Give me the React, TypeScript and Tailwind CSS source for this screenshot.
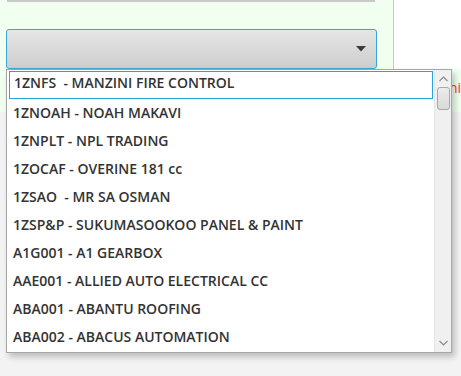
import React from "react";

const items = [
  "1ZNFS  - MANZINI FIRE CONTROL",
  "1ZNOAH - NOAH MAKAVI",
  "1ZNPLT - NPL TRADING",
  "1ZOCAF - OVERINE 181 cc",
  "1ZSAO  - MR SA OSMAN",
  "1ZSP&P - SUKUMASOOKOO PANEL & PAINT",
  "A1G001 - A1 GEARBOX",
  "AAE001 - ALLIED AUTO ELECTRICAL CC",
  "ABA001 - ABANTU ROOFING",
  "ABA002 - ABACUS AUTOMATION",
];

export default function App() {
  return (
    <div
      className="relative w-[461px] h-[376px] bg-[#f3f3f3] overflow-hidden"
      style={{ fontFamily: '"Open Sans", "Noto Sans", sans-serif' }}
    >
      <div className="flex h-[112px]">
        <div className="w-[397px] bg-[#f0fff0] border-r border-[#c8c8c8] pl-[6px]">
          <div className="h-[2px] ml-[1px] w-[368px] bg-[#c9c9c9]" />
          <div className="mt-[27px] h-[40px] w-[371px] rounded-[3px] border border-[#3aa6d6] bg-gradient-to-b from-[#e6e6e6] to-[#cdcdcd] flex items-center justify-end pr-[10px]">
            <svg width="10" height="6" viewBox="0 0 10 6">
              <path d="M0 0 H10 L5 5.5 Z" fill="#3c3c3c" />
            </svg>
          </div>
        </div>
        <div className="flex-1 bg-white pt-[69px]">
          <div className="h-[43px] ml-[43px] bg-[#f0fff0] pt-[10px] pl-[12px] text-[14px] text-[#ff3030] leading-[18px] overflow-hidden whitespace-nowrap">
            ni
          </div>
        </div>
      </div>

      <div className="absolute left-[6px] top-[69px] w-[446px] h-[284px] bg-white border border-[#a6a6a6] shadow-[3px_4px_6px_rgba(0,0,0,0.22)] flex">
        <div className="flex-1 pt-[1px] pl-[2px] pr-[1px]">
          {items.map((t, i) => (
            <div
              key={i}
              className={
                "h-[28px] flex items-center pl-[4px] pb-[4px] whitespace-pre text-[14px] leading-[20px] font-semibold text-[#333333] " +
                (i === 0 ? "h-[26px] mb-[2px] pb-[2px] border border-[#2aa3d8] pl-[3px]" : "")
              }
            >
              {t}
            </div>
          ))}
        </div>
        <div className="w-[17px] bg-[#f0f0f0] border-l border-[#e4e4e4] flex flex-col items-center">
          <svg className="mt-[6px]" width="9" height="6" viewBox="0 0 9 6">
            <path d="M0.5 5 L4.5 1 L8.5 5" fill="none" stroke="#8a8a8a" strokeWidth="1.2" />
          </svg>
          <div className="mt-[5px] w-[13px] h-[23px] rounded-[3px] border border-[#a8a8a8] bg-gradient-to-b from-[#ececec] to-[#d9d9d9]" />
          <div className="flex-1" />
          <svg className="mb-[6px]" width="9" height="6" viewBox="0 0 9 6">
            <path d="M0.5 1 L4.5 5 L8.5 1" fill="none" stroke="#8a8a8a" strokeWidth="1.2" />
          </svg>
        </div>
      </div>
    </div>
  );
}
